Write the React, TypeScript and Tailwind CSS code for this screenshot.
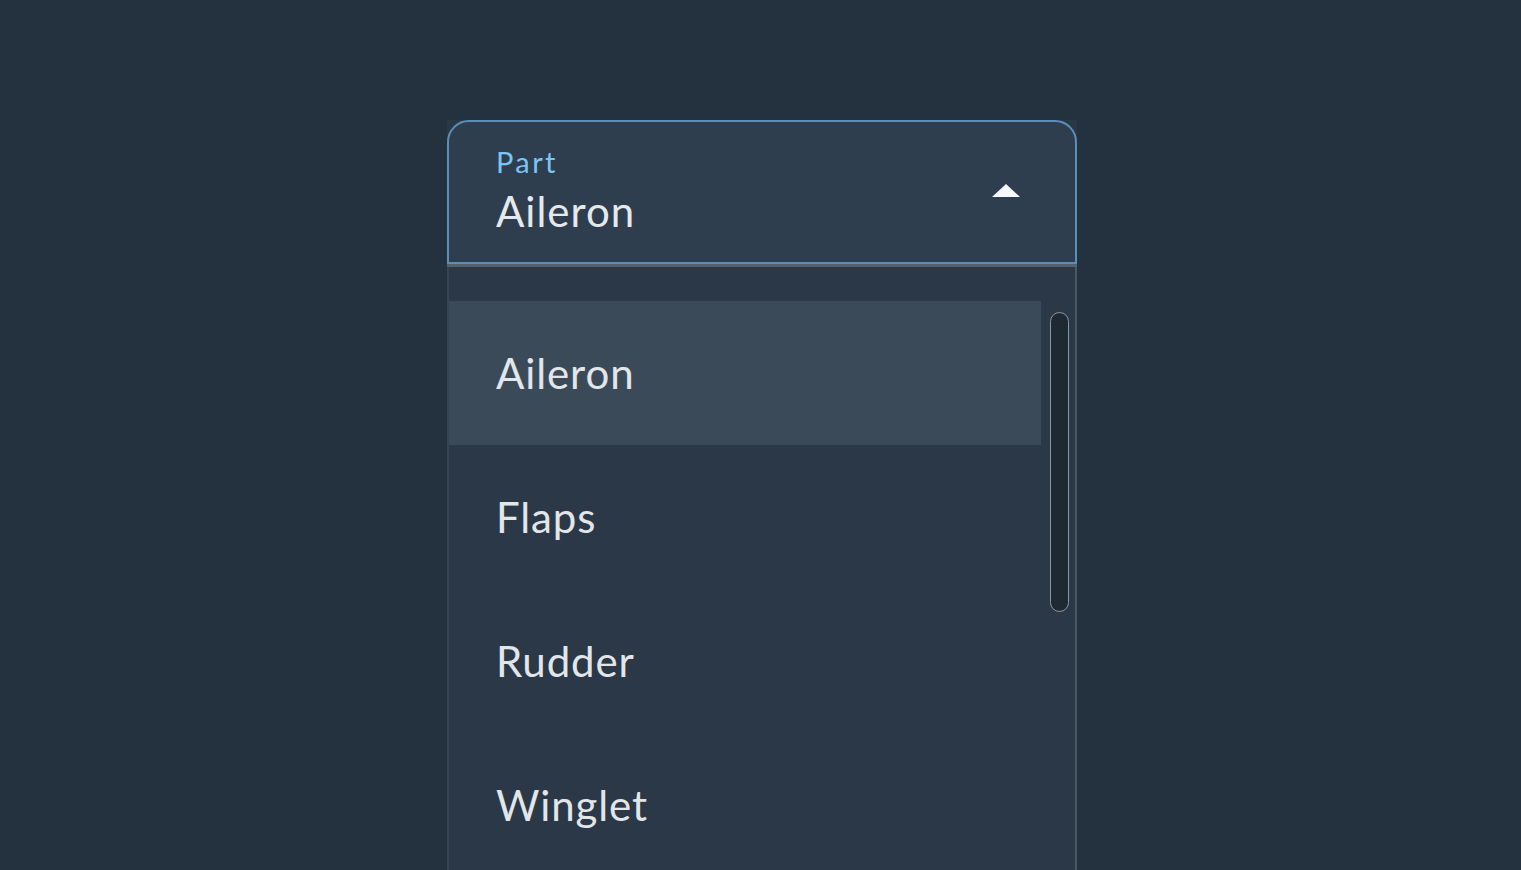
import { useState } from "react";

const parts = ["Aileron", "Flaps", "Rudder", "Winglet"];

export default function App() {
  const [selected] = useState("Aileron");
  return (
    <div
      className="min-h-[870px] w-full overflow-hidden bg-[#24313e] pt-[120px]"
      style={{ fontFamily: "Lato, 'Noto Sans', sans-serif" }}
    >
      <div className="ml-[447px] w-[630px] bg-[#2a3745]">
        {/* field */}
        <div className="flex h-[144px] items-start justify-between rounded-t-[22px] border-2 border-[#5b8fb8] bg-[#2f3e4f] pl-[47px] pr-[54px]">
          <div className="flex flex-col pt-[23px]">
            <span className="text-[29px] leading-[34px] tracking-[2.4px] text-[#7cc4f4]">Part</span>
            <span className="mt-[8px] text-[42px] leading-[48px] tracking-[1px] text-[#e6e9ec]">{selected}</span>
          </div>
          <svg width="30" height="16" viewBox="0 0 30 16" className="mt-[61px]">
            <polygon points="15,1 29,14 1,14" fill="#f8f9fa" />
          </svg>
        </div>
        <div className="h-[3px] bg-[#55616d]" />
        {/* list */}
        <div className="relative h-[620px] border-l-2 border-r-2 border-l-[#354352] border-r-[#4a5662] bg-[#2a3847] pt-[34px]">
          <ul className="mr-[34px]">
            {parts.map((p) => (
              <li
                key={p}
                className={`flex h-[144px] items-center pl-[47px] text-[42px] tracking-[0.9px] text-[#e3e6e9] ${
                  p === selected ? "bg-[#3b4a59]" : ""
                }`}
              >
                {p}
              </li>
            ))}
          </ul>
          <div className="absolute right-[6px] top-[45px] h-[300px] w-[19px] rounded-full border-[1.5px] border-[#8d969f] bg-[#1f2933]" />
        </div>
      </div>
    </div>
  );
}
